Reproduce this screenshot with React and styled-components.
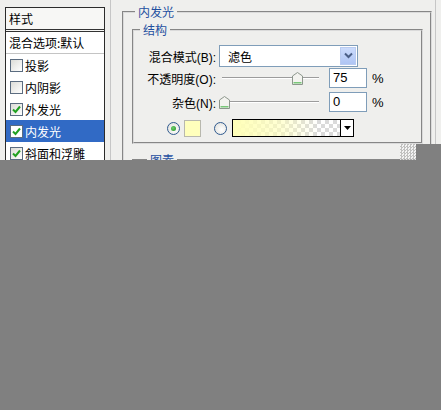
import styled, { createGlobalStyle } from "styled-components";

const GlobalStyle = createGlobalStyle`
  html, body {
    margin: 0;
    padding: 0;
    background: #808080;
  }
  body {
    font-family: "Liberation Sans", "Noto Sans CJK SC", sans-serif;
    font-size: 12px;
    color: #000;
  }
`;

const Page = styled.div`
  position: relative;
  width: 441px;
  height: 410px;
  overflow: hidden;
  background: #808080;
`;

const Dialog = styled.div`
  display: flex;
  align-items: stretch;
  height: 160px;
  overflow: hidden;
  background: #efefed;
`;

const LeftColumn = styled.div`
  padding: 7px 0 0 5px;
`;

const StyleList = styled.div`
  width: 100px;
  box-sizing: border-box;
  border: 1px solid #2b2b2b;
  background: #fff;
  font-family: "Noto Sans CJK SC", sans-serif;
  font-size: 12px;
`;

const ListHeader = styled.div`
  height: 21px;
  line-height: 21px;
  padding-left: 3px;
  background: #f7f7f5;
  border-bottom: 3px double #333;
`;

const BlendRow = styled.div`
  height: 21px;
  line-height: 21px;
  padding-left: 3px;
  border-bottom: 1px solid #c4c4c4;
`;

const ListItem = styled.div`
  display: flex;
  align-items: center;
  height: 22px;
  padding-left: 4px;
  background: ${({ $selected }) => ($selected ? "#316ac5" : "transparent")};
  color: ${({ $selected }) => ($selected ? "#fff" : "#000")};
`;

const CheckBox = styled.span`
  display: flex;
  align-items: center;
  justify-content: center;
  width: 13px;
  height: 13px;
  box-sizing: border-box;
  margin-right: 2px;
  border: 1px solid #5b6c80;
  background: ${({ $selected }) =>
    $selected ? "#fff" : "linear-gradient(135deg, #dcdcd7, #ffffff)"};
`;

const Panel = styled.div`
  width: 326px;
  margin-left: 5px;
  box-sizing: border-box;
  border-left: 1px solid #c6c6c6;
  border-right: 1px solid #c6c6c6;
  padding: 5px 0 0 11px;
`;

const Group = styled.fieldset`
  margin: ${({ $top }) => $top || 0}px 0 0;
  padding: ${({ $pad }) => $pad || "0"};
  width: ${({ $width }) => $width}px;
  min-width: 0;
  box-sizing: border-box;
  border: 2px groove #dadada;
`;

const Legend = styled.legend`
  margin-left: ${({ $indent }) => $indent}px;
  padding: 0 3px;
  color: #1f4fa0;
  font-family: "Noto Sans CJK SC", sans-serif;
  font-size: 12px;
  line-height: 14px;
`;

const Row = styled.div`
  display: flex;
  align-items: center;
  height: ${({ $h }) => $h}px;
  margin-top: ${({ $mt }) => $mt || 0}px;
  padding-left: ${({ $indent }) => $indent || 0}px;
`;

const Label = styled.span`
  width: 82px;
  margin-right: 3px;
  text-align: right;
  white-space: nowrap;
  font-size: 12px;
`;

const Select = styled.div`
  display: flex;
  align-items: center;
  width: 139px;
  height: 22px;
  box-sizing: border-box;
  border: 1px solid #7f9db9;
  background: #fff;
`;

const SelectText = styled.span`
  flex: 1;
  padding-left: 8px;
  font-family: "Noto Sans CJK SC", sans-serif;
  font-size: 12px;
`;

const SelectButton = styled.span`
  display: flex;
  align-items: center;
  justify-content: center;
  width: 16px;
  height: 18px;
  margin-right: 1px;
  box-sizing: border-box;
  border: 1px solid #b9cbf0;
  background: linear-gradient(#cbdbfc, #afc5f4);
`;

const Slider = styled.div`
  position: relative;
  width: 100px;
  height: 20px;
`;

const Track = styled.div`
  position: absolute;
  left: 3px;
  right: 0;
  top: 9px;
  border-top: 1px solid #9c9c9c;
  border-bottom: 1px solid #fff;
`;

const Thumb = styled.svg`
  position: absolute;
  top: 4px;
`;

const NumberBox = styled.div`
  width: 38px;
  height: 20px;
  box-sizing: border-box;
  margin-left: 10px;
  padding-left: 3px;
  border: 1px solid #7f9db9;
  background: #fff;
  font-size: 13px;
  line-height: 18px;
`;

const Percent = styled.span`
  margin-left: 5px;
  font-size: 13px;
`;

const Radio = styled.span`
  display: flex;
  align-items: center;
  justify-content: center;
  width: 13px;
  height: 13px;
  box-sizing: border-box;
  margin-left: ${({ $ml }) => $ml || 0}px;
  border: 1px solid #2f5a8f;
  border-radius: 50%;
  background: radial-gradient(circle at 60% 60%, #ffffff, #dcdcd7);

  &::after {
    content: "";
    display: ${({ $checked }) => ($checked ? "block" : "none")};
    width: 5px;
    height: 5px;
    border-radius: 50%;
    background: radial-gradient(circle at 40% 40%, #6fcf6f, #1f8f1f);
  }
`;

const Swatch = styled.span`
  width: 17px;
  height: 17px;
  box-sizing: border-box;
  margin-left: 4px;
  border: 1px solid #b8b8ae;
  background: #ffffbc;
`;

const GradientBox = styled.div`
  display: flex;
  width: 122px;
  height: 18px;
  box-sizing: border-box;
  margin-left: 5px;
  border: 1px solid #000;
`;

const GradientFill = styled.span`
  flex: 1;
  background: linear-gradient(to right, #ffffb8 0%, rgba(255, 255, 184, 0.6) 45%, rgba(255, 255, 184, 0) 80%),
    repeating-conic-gradient(#dadada 0% 25%, #ffffff 0% 50%) 0 0 / 8px 8px;
`;

const GradientArrow = styled.span`
  display: flex;
  align-items: center;
  justify-content: center;
  width: 12px;
  border-left: 1px solid #000;
  background: #fff;
`;

const Cover = styled.div`
  position: absolute;
  top: 144px;
  left: 416px;
  width: 25px;
  height: 16px;
  background: #808080;
`;

const Grip = styled.div`
  position: absolute;
  top: 144px;
  left: 400px;
  width: 16px;
  height: 16px;
  background: repeating-conic-gradient(#b4b4b4 0% 25%, #f4f4f4 0% 50%) 0 0 / 3px 3px;
  opacity: 0.8;
`;

const items = [
  { name: "投影", checked: false },
  { name: "内阴影", checked: false },
  { name: "外发光", checked: true },
  { name: "内发光", checked: true, selected: true },
  { name: "斜面和浮雕", checked: true },
];

const Check = () => (
  <svg width="9" height="9" viewBox="0 0 9 9">
    <path d="M1 4.5 L3.5 7 L8 1.5" fill="none" stroke="#21a121" strokeWidth="2" />
  </svg>
);

const SliderThumb = ({ value }) => (
  <Thumb
    width="11"
    height="13"
    viewBox="0 0 11 13"
    style={{ left: Math.round(value * 0.97) }}
  >
    <path d="M0.5 4 L5.5 0.5 L10.5 4 V12.5 H0.5 Z" fill="#f3f3ef" stroke="#8c968c" />
    <path d="M1.5 10 H9.5 V11.5 H1.5 Z" fill="#79c779" />
  </Thumb>
);

const App = () => {
  const opacity = 75;
  const noise = 0;

  return (
    <Page>
      <GlobalStyle />
      <Dialog>
        <LeftColumn>
          <StyleList>
            <ListHeader>样式</ListHeader>
            <BlendRow>混合选项:默认</BlendRow>
            {items.map((item) => (
              <ListItem key={item.name} $selected={item.selected}>
                <CheckBox $selected={item.selected}>{item.checked && <Check />}</CheckBox>
                {item.name}
              </ListItem>
            ))}
          </StyleList>
        </LeftColumn>
        <Panel>
          <Group $width={310} $pad="4px 7px 0 8px">
            <Legend $indent={3}>内发光</Legend>
            <Group $width={291} $pad="8px 0 5px 0">
              <Legend $indent={6}>结构</Legend>
              <Row $h={22}>
                <Label>混合模式(B):</Label>
                <Select>
                  <SelectText>滤色</SelectText>
                  <SelectButton>
                    <svg width="9" height="8" viewBox="0 0 9 8">
                      <path d="M1 1.5 L4.5 5 L8 1.5" fill="none" stroke="#4b5f86" strokeWidth="2" />
                    </svg>
                  </SelectButton>
                </Select>
              </Row>
              <Row $h={20} $mt={1}>
                <Label>不透明度(O):</Label>
                <Slider>
                  <Track />
                  <SliderThumb value={opacity} />
                </Slider>
                <NumberBox>{opacity}</NumberBox>
                <Percent>%</Percent>
              </Row>
              <Row $h={20} $mt={4}>
                <Label>杂色(N):</Label>
                <Slider>
                  <Track />
                  <SliderThumb value={noise} />
                </Slider>
                <NumberBox>{noise}</NumberBox>
                <Percent>%</Percent>
              </Row>
              <Row $h={18} $mt={7} $indent={33}>
                <Radio $checked />
                <Swatch />
                <Radio $ml={13} />
                <GradientBox>
                  <GradientFill />
                  <GradientArrow>
                    <svg width="7" height="4" viewBox="0 0 7 4">
                      <path d="M0 0 H7 L3.5 4 Z" fill="#000" />
                    </svg>
                  </GradientArrow>
                </GradientBox>
              </Row>
            </Group>
            <Group $width={291} $top={9} $pad="0 0 30px 0">
              <Legend $indent={13}>图素</Legend>
            </Group>
          </Group>
        </Panel>
      </Dialog>
      <Grip />
      <Cover />
    </Page>
  );
};

export default App;
